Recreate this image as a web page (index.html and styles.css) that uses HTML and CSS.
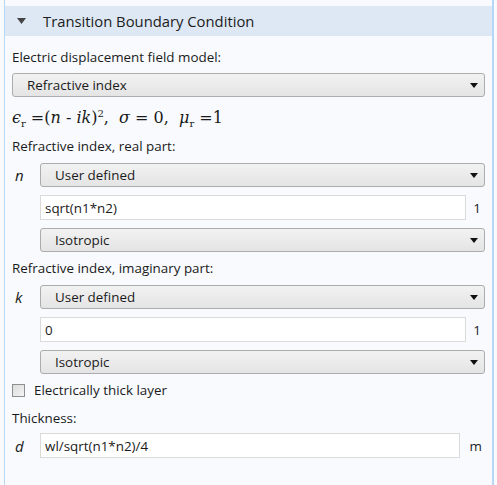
FILE: index.html
```html
<!DOCTYPE html>
<html>
<head>
<meta charset="utf-8">
<link rel="stylesheet" href="styles.css">
</head>
<body>
<div class="panel">
  <div class="header">
    <svg class="caret" width="9" height="6" viewBox="0 0 9 6"><path d="M0 0 H9 L4.5 6 Z" fill="#444"/></svg>
    <span class="title">Transition Boundary Condition</span>
  </div>
  <div class="body">
    <div class="label first">Electric displacement field model:</div>
    <div class="select full"><span>Refractive index</span><svg width="8" height="5" viewBox="0 0 8 5"><path d="M0 0 H8 L4 5 Z" fill="#111"/></svg></div>
    <div class="formula"><i>ϵ</i><sub>r</sub> =(<i>n</i> - <i>ik</i>)<sup>2</sup>,&nbsp; <i>σ</i> = 0,&nbsp; <i>μ</i><sub>r</sub> =1</div>

    <div class="label">Refractive index, real part:</div>
    <div class="row">
      <span class="sym">n</span>
      <div class="select"><span>User defined</span><svg width="8" height="5" viewBox="0 0 8 5"><path d="M0 0 H8 L4 5 Z" fill="#111"/></svg></div>
    </div>
    <div class="row">
      <span class="sym"></span>
      <div class="input">sqrt(n1*n2)</div>
      <span class="unit">1</span>
    </div>
    <div class="row">
      <span class="sym"></span>
      <div class="select"><span>Isotropic</span><svg width="8" height="5" viewBox="0 0 8 5"><path d="M0 0 H8 L4 5 Z" fill="#111"/></svg></div>
    </div>

    <div class="label imag">Refractive index, imaginary part:</div>
    <div class="row">
      <span class="sym">k</span>
      <div class="select"><span>User defined</span><svg width="8" height="5" viewBox="0 0 8 5"><path d="M0 0 H8 L4 5 Z" fill="#111"/></svg></div>
    </div>
    <div class="row">
      <span class="sym"></span>
      <div class="input">0</div>
      <span class="unit">1</span>
    </div>
    <div class="row">
      <span class="sym"></span>
      <div class="select"><span>Isotropic</span><svg width="8" height="5" viewBox="0 0 8 5"><path d="M0 0 H8 L4 5 Z" fill="#111"/></svg></div>
    </div>

    <div class="check"><span class="box"></span><span>Electrically thick layer</span></div>
    <div class="label thick">Thickness:</div>
    <div class="row last">
      <span class="sym">d</span>
      <div class="input">wl/sqrt(n1*n2)/4</div>
      <span class="unit m">m</span>
    </div>
  </div>
</div>
</body>
</html>
```
FILE: styles.css
```css
html, body {
  margin: 0;
  padding: 0;
  background: #f8fafe;
}
body {
  font-family: "Open Sans", "Noto Sans", sans-serif;
  font-size: 13.4px;
  color: #1a1a1a;
}
.panel {
  margin-left: 4px;
  width: 490px;
  height: 485px;
  border-left: 1px solid #b7d8f5;
  border-right: 2px solid #b7d8f5;
  background: #f8fafe;
  box-sizing: border-box;
  padding-top: 6px;
}
.header {
  height: 30px;
  background: #dde8f4;
  display: flex;
  align-items: center;
  padding-left: 12px;
}
.caret { margin-right: 17px; }
.title {
  font-size: 14.8px;
  color: #1c1c1c;
}
.body {
  padding: 0 7px 0 7px;
}
.label {
  height: 18px;
  line-height: 18px;
  margin-top: 9px;
}
.label.first { margin-top: 12px; }
.label.imag { margin-top: 7px; }
.label.thick { margin-top: 10px; }
.select {
  height: 24px;
  box-sizing: border-box;
  border: 1px solid #acacac;
  border-radius: 3px;
  background: linear-gradient(#f2f2f2, #e4e4e4);
  display: flex;
  align-items: center;
  justify-content: space-between;
  padding: 0 6px 0 14px;
  flex: 1;
}
.select.full {
  margin-top: 7px;
}
.formula {
  font-family: "DejaVu Serif", serif;
  font-size: 16px;
  height: 20px;
  line-height: 20px;
  margin-top: 11px;
}
.formula i { font-style: italic; }
.formula sub, .formula sup { font-size: 10px; line-height: 0; }
.row {
  display: flex;
  align-items: center;
  margin-top: 8px;
}
.sym {
  width: 28px;
  flex: none;
  font-style: italic;
  font-size: 15px;
  padding-left: 3px;
  box-sizing: border-box;
}
.input {
  flex: 1;
  height: 25px;
  box-sizing: border-box;
  border: 1px solid #dadada;
  background: #fff;
  padding-left: 4px;
  display: flex;
  align-items: center;
}
.unit {
  width: 19px;
  flex: none;
  text-align: right;
  padding-right: 4px;
  box-sizing: border-box;
  font-size: 13.4px;
}
.unit.m { width: 25px; padding-right: 3px; }
.check {
  display: flex;
  align-items: center;
  margin-top: 7px;
  height: 18px;
}
.box {
  width: 11px;
  height: 11px;
  border: 1px solid #8e8f8f;
  background: linear-gradient(135deg, #dcdcdc, #f4f4f4);
  margin-right: 9px;
}
.row.last { margin-top: 6px; }
```
